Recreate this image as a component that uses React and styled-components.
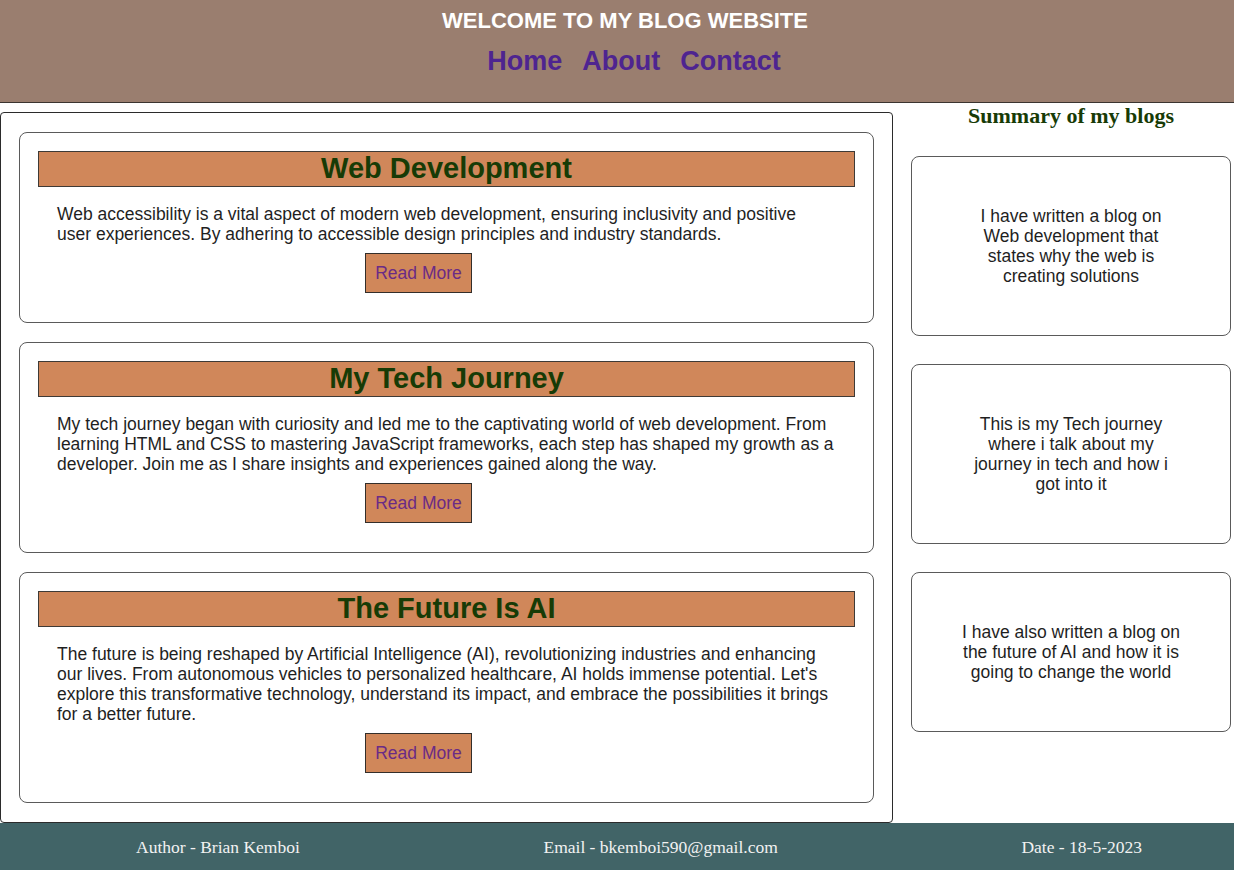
import React from "react";
import styled, { createGlobalStyle } from "styled-components";

const Global = createGlobalStyle`
  html, body { margin: 0; padding: 0; background: #ffffff; }
  body { font-family: "Liberation Sans", Arial, sans-serif; }
  * { box-sizing: border-box; }
`;

const Header = styled.header`
  background: #9a7e6f;
  height: 103px;
  border-bottom: 1px solid #3a3430;
  display: flex;
  flex-direction: column;
  align-items: center;
`;

const SiteTitle = styled.h1`
  margin: 8px 0 0 16px;
  font-size: 22px;
  line-height: 26px;
  font-weight: 700;
  color: #ffffff;
  font-family: "Liberation Sans", Arial, sans-serif;
`;

const Nav = styled.nav`
  display: flex;
  gap: 20px;
  margin: 10px 0 0 34px;
`;

const NavLink = styled.a`
  font-size: 27px;
  line-height: 34px;
  font-weight: 700;
  color: #4e2490;
  text-decoration: none;
  font-family: "Liberation Sans", Arial, sans-serif;
`;

const Main = styled.main`
  display: flex;
  align-items: flex-start;
`;

const Posts = styled.section`
  flex: none;
  width: 893px;
  margin-top: 9px;
  border: 1px solid #2b2b2b;
  border-radius: 4px;
  padding: 19px 18px;
  display: flex;
  flex-direction: column;
  gap: 19px;
`;

const Card = styled.article`
  border: 1px solid #5a5a5a;
  border-radius: 8px;
  padding: 18px 18px;
  display: flex;
  flex-direction: column;
  align-items: center;
`;

const CardTitle = styled.h2`
  align-self: stretch;
  margin: 0;
  height: 36px;
  background: #d0875a;
  border: 1px solid #3e3a36;
  color: #173b06;
  font-size: 29px;
  line-height: 33px;
  font-weight: 700;
  text-align: center;
  font-family: "Liberation Sans", Arial, sans-serif;
`;

const CardText = styled.p`
  align-self: stretch;
  margin: 17px 0 0;
  padding: 0 21.5px 0 19px;
  font-size: 17.5px;
  line-height: 20px;
  color: #1f1f1f;
`;

const ReadMore = styled.button`
  margin: 9px 56px 11px 0;
  height: 40px;
  padding: 0 9px;
  background: #d0875a;
  border: 1px solid #332e2a;
  color: #6a2b86;
  font-size: 17.5px;
  font-family: "Liberation Sans", Arial, sans-serif;
  cursor: pointer;
`;

const Aside = styled.aside`
  flex: none;
  width: 320px;
  margin-left: 18px;
  display: flex;
  flex-direction: column;
`;

const AsideTitle = styled.h3`
  margin: 0;
  line-height: 26px;
  font-size: 22px;
  font-weight: 700;
  text-align: center;
  color: #173b06;
  font-family: "Liberation Serif", "Times New Roman", serif;
`;

const SummaryList = styled.div`
  margin-top: 27px;
  display: flex;
  flex-direction: column;
  gap: 28px;
`;

const Summary = styled.div`
  border: 1px solid #5a5a5a;
  border-radius: 8px;
  padding: 49px 50px 49px;
  text-align: center;
  font-size: 17.5px;
  line-height: 20px;
  color: #1f1f1f;
`;

const Footer = styled.footer`
  background: #416467;
  height: 48px;
  display: flex;
  align-items: center;
  justify-content: space-between;
  padding: 0 92px 0 136px;
`;

const FooterItem = styled.span`
  color: #f2f2f2;
  font-size: 17.5px;
  font-family: "Liberation Serif", "Times New Roman", serif;
`;

const posts = [
  {
    title: "Web Development",
    text:
      "Web accessibility is a vital aspect of modern web development, ensuring inclusivity and positive user experiences. By adhering to accessible design principles and industry standards.",
  },
  {
    title: "My Tech Journey",
    text:
      "My tech journey began with curiosity and led me to the captivating world of web development. From learning HTML and CSS to mastering JavaScript frameworks, each step has shaped my growth as a developer. Join me as I share insights and experiences gained along the way.",
  },
  {
    title: "The Future Is AI",
    text:
      "The future is being reshaped by Artificial Intelligence (AI), revolutionizing industries and enhancing our lives. From autonomous vehicles to personalized healthcare, AI holds immense potential. Let's explore this transformative technology, understand its impact, and embrace the possibilities it brings for a better future.",
  },
];

const summaries = [
  "I have written a blog on Web development that states why the web is creating solutions",
  "This is my Tech journey where i talk about my journey in tech and how i got into it",
  "I have also written a blog on the future of AI and how it is going to change the world",
];

export default function App() {
  return (
    <>
      <Global />
      <Header>
        <SiteTitle>WELCOME TO MY BLOG WEBSITE</SiteTitle>
        <Nav>
          <NavLink href="#">Home</NavLink>
          <NavLink href="#">About</NavLink>
          <NavLink href="#">Contact</NavLink>
        </Nav>
      </Header>
      <Main>
        <Posts>
          {posts.map((p) => (
            <Card key={p.title}>
              <CardTitle>{p.title}</CardTitle>
              <CardText>{p.text}</CardText>
              <ReadMore>Read More</ReadMore>
            </Card>
          ))}
        </Posts>
        <Aside>
          <AsideTitle>Summary of my blogs</AsideTitle>
          <SummaryList>
            {summaries.map((s) => (
              <Summary key={s}>{s}</Summary>
            ))}
          </SummaryList>
        </Aside>
      </Main>
      <Footer>
        <FooterItem>Author - Brian Kemboi</FooterItem>
        <FooterItem>Email - bkemboi590@gmail.com</FooterItem>
        <FooterItem>Date - 18-5-2023</FooterItem>
      </Footer>
    </>
  );
}
